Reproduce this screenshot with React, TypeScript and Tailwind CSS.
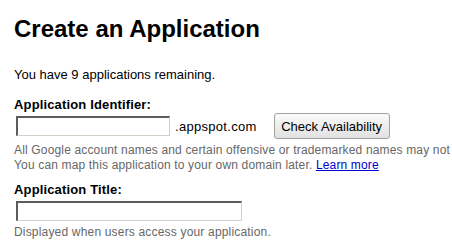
export default function App() {
  return (
    <div className="w-[452px] h-[245px] overflow-hidden bg-white pl-[14px] font-['Liberation_Sans',Arial,sans-serif] text-black">
      <h1 className="mt-[15px] text-[24px] leading-[28px] font-bold whitespace-nowrap">Create an Application</h1>

      <p className="mt-[24px] text-[13px] leading-[15px]">You have 9 applications remaining.</p>

      <label className="block mt-[15px] text-[13px] leading-[15px] font-bold tracking-[0.15px]">Application Identifier:</label>
      <div className="mt-px flex items-center h-[26px]">
        <input
          type="text"
          className="ml-[2px] w-[154px] h-[20px] border-t-2 border-l-2 border-b border-r border-t-[#5c5c5c] border-l-[#5c5c5c] border-b-[#d4d0c8] border-r-[#d4d0c8] bg-white outline-none"
        />
        <span className="ml-[5px] text-[13px] leading-[15px] tracking-[0.3px]">.appspot.com</span>
        <button className="ml-[17px] w-[116px] h-[26px] rounded-[3px] border border-[#a0a0a0] bg-gradient-to-b from-[#fbfbfb] to-[#e1e1e1] text-[13px] leading-[15px] text-black">
          Check Availability
        </button>
      </div>

      <div className="mt-[4px] text-[12px] leading-[15px] tracking-[0.16px] text-[#676767] whitespace-nowrap">
        <div>All Google account names and certain offensive or trademarked names may not</div>
        <div>
          You can map this application to your own domain later.{' '}
          <a href="#" className="text-[#0000cc] underline">Learn more</a>
        </div>
      </div>

      <label className="block mt-[9px] text-[13px] leading-[15px] font-bold tracking-[0.15px]">Application Title:</label>
      <input
        type="text"
        className="block mt-[4px] ml-[2px] w-[226px] h-[20px] border-t-2 border-l-2 border-b border-r border-t-[#5c5c5c] border-l-[#5c5c5c] border-b-[#d4d0c8] border-r-[#d4d0c8] bg-white outline-none"
      />

      <p className="mt-[4px] text-[12px] leading-[15px] tracking-[0.18px] text-[#676767]">Displayed when users access your application.</p>
    </div>
  );
}
